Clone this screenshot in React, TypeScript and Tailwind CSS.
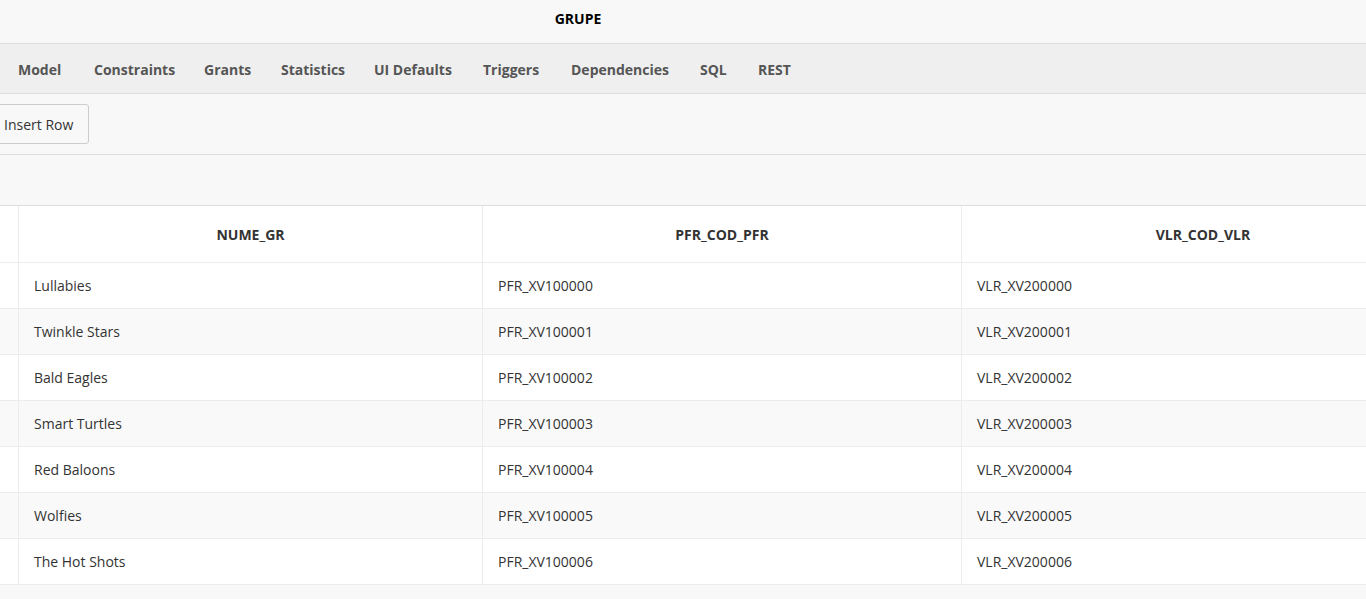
const tabs = [
	{ label: "Model", w: "w-[76px]" },
	{ label: "Constraints", w: "w-[110px]" },
	{ label: "Grants", w: "w-[77px]" },
	{ label: "Statistics", w: "w-[93px]" },
	{ label: "UI Defaults", w: "w-[109px]" },
	{ label: "Triggers", w: "w-[88px]" },
	{ label: "Dependencies", w: "w-[129px]" },
	{ label: "SQL", w: "w-[58px]" },
	{ label: "REST", w: "w-[60px]" },
];

const rows = [
	["Lullabies", "PFR_XV100000", "VLR_XV200000"],
	["Twinkle Stars", "PFR_XV100001", "VLR_XV200001"],
	["Bald Eagles", "PFR_XV100002", "VLR_XV200002"],
	["Smart Turtles", "PFR_XV100003", "VLR_XV200003"],
	["Red Baloons", "PFR_XV100004", "VLR_XV200004"],
	["Wolfies", "PFR_XV100005", "VLR_XV200005"],
	["The Hot Shots", "PFR_XV100006", "VLR_XV200006"],
];

export default function App() {
	return (
		<div className="w-[1366px] h-[599px] overflow-hidden bg-[#f8f8f8] text-[14px] text-[#333] font-['Open_Sans',sans-serif]">
			<header className="h-[44px] flex items-center pb-[7px] border-b border-[#dddddd]">
				<h1 className="w-[1156px] text-center font-bold text-black text-[14px]">GRUPE</h1>
			</header>

			<nav className="h-[50px] flex items-center pt-[2px] bg-[#efefef] border-b border-[#dddddd] pl-[18px]">
				{tabs.map((t) => (
					<span key={t.label} className={`${t.w} shrink-0 font-bold text-[#555]`}>
						{t.label}
					</span>
				))}
			</nav>

			<div className="h-[61px] flex items-center border-b border-[#dddddd]">
				<button className="ml-[-12px] h-[40px] px-[15px] bg-[#f8f8f8] border border-[#cccccc] rounded-[3px] text-[#333]">
					Insert Row
				</button>
			</div>

			<div className="h-[51px] border-b border-[#dddddd]" />

			<div className="w-[1444px] bg-white">
				<div className="grid grid-cols-[19px_464px_479px_482px] h-[57px] border-b border-[#ececec]">
					<div className="border-r border-[#ececec]" />
					<div className="flex items-center justify-center font-bold border-r border-[#ececec]">NUME_GR</div>
					<div className="flex items-center justify-center font-bold border-r border-[#ececec]">PFR_COD_PFR</div>
					<div className="flex items-center justify-center font-bold">VLR_COD_VLR</div>
				</div>
				{rows.map((r, i) => (
					<div
						key={r[0]}
						className={`grid grid-cols-[19px_464px_479px_482px] h-[46px] border-b border-[#ececec] ${i % 2 ? "bg-[#f9f9f9]" : "bg-white"}`}
					>
						<div className="border-r border-[#ececec]" />
						<div className="flex items-center px-[15px] border-r border-[#ececec]">{r[0]}</div>
						<div className="flex items-center px-[15px] border-r border-[#ececec]">{r[1]}</div>
						<div className="flex items-center px-[15px]">{r[2]}</div>
					</div>
				))}
			</div>
		</div>
	);
}
